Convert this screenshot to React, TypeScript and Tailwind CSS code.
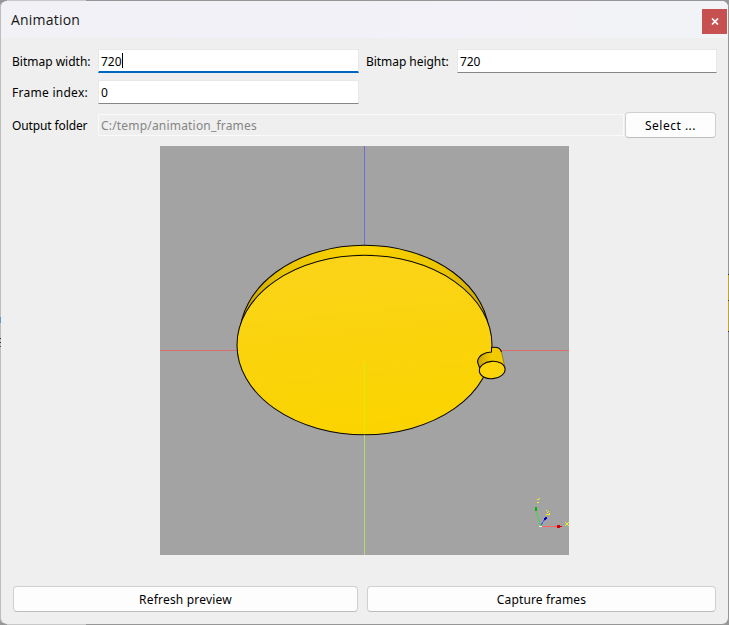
import React from "react";

const field =
  "flex items-center bg-white border border-[#e8e8e8] border-b-[#868686] pl-[2px]";
const button =
  "flex items-center justify-center rounded-[4px] border border-[#d0d0d0] border-b-[#bcbcbc] bg-[#fdfdfd] pt-[2px]";

function Preview() {
  return (
    <svg width="409" height="409" viewBox="160 146 409 409" className="mx-auto mt-[8px] block bg-[#a3a3a3]">
      <defs>
        <linearGradient id="face" x1="0" y1="0" x2="0.15" y2="1">
          <stop offset="0" stopColor="#fbd41b" />
          <stop offset="0.6" stopColor="#fad30b" />
          <stop offset="1" stopColor="#fbd400" />
        </linearGradient>
        <linearGradient id="rim">
          <stop offset="0" stopColor="#c7a500" />
          <stop offset="0.18" stopColor="#ebc500" />
          <stop offset="0.5" stopColor="#fbd400" />
          <stop offset="0.82" stopColor="#ebc500" />
          <stop offset="1" stopColor="#c7a500" />
        </linearGradient>
        <linearGradient id="peg">
          <stop offset="0" stopColor="#c5a200" />
          <stop offset="0.5" stopColor="#f3cb00" />
          <stop offset="1" stopColor="#f0c900" />
        </linearGradient>
      </defs>
      <path d="M160 350.5H238M499 350.5H569" stroke="#dc6e6e" />
      <path d="M364.5 146V246" stroke="#706edc" />
      <ellipse cx="364.500" cy="336.500" rx="124.800" ry="91.200" fill="url(#rim)" stroke="#0a0800" strokeWidth="1.050" />
      <ellipse cx="364.500" cy="345" rx="127.500" ry="89.700" fill="url(#face)" stroke="#0a0800" strokeWidth="1.050" />
      <path d="M364.5 362V434" stroke="#d9ee08" />
      <path d="M364.5 435V555" stroke="#b3dc70" />
      <path d="M477.500 362C478 356 484 352 491.500 352L492 347.500C497 346.500 500.500 348 501.500 352L505 368L480 371Z" fill="url(#peg)" />
      <path d="M480 369L477.500 362C478 356 484 352 491.500 352V347.500C497 346.500 500.500 348 501.500 352" fill="none" stroke="#0a0800" strokeWidth="1.050" />
      <path d="M501.500 352L505 368" stroke="#6f5d10" strokeWidth="0.600" />
      <ellipse cx="492.200" cy="370" rx="12.900" ry="8.700" transform="rotate(-5 492.200 370)" fill="#fbd40b" stroke="#0a0800" strokeWidth="1.100" />
      <g shapeRendering="crispEdges">
        <path d="M541 526.5H558" stroke="#ff6262" />
        <path d="M557 525h3v1h2v1h-2v1h-3z" fill="#d60000" />
        <path d="M540.500 526L536.500 511" stroke="#19ef25" strokeDasharray="3 1" />
        <path d="M535 507h2v4h-2z" fill="#00b800" />
        <path d="M541 525L545 519" stroke="#5757ff" />
        <path d="M544 518h1v-1h2v2h-1v1h-2z" fill="#0000c5" />
        <path d="M537 499.500h2M539 498.500h1M537 502.500h2M546 510.500h1M548 511.500h1M547 512.500h1M546 514.500h4M549 513.500h1M565 522.500h1M568 522.500h1M566 523.500h2M566 524.500h2M565 525.500h1M568 525.500h1" stroke="#f4ef25" />
        <path d="M539 526h3v1h-3z" fill="#eee" />
      </g>
    </svg>
  );
}

export default function App() {
  return (
    <div className="relative h-[625px] w-[729px] overflow-hidden bg-[#969696] font-['Noto_Sans',sans-serif] text-[12px] leading-4 text-black">
      <main className="flex h-full w-full flex-col overflow-hidden rounded-[7px] border border-[#969696] border-l-[#bdbdbd] bg-[#efefef]">
        <header className="flex h-[37px] shrink-0 items-center justify-between bg-gradient-to-r from-[#f1f1f6] via-[#f3f1f8] to-[#f1f3f6] pl-[10px]">
          <h1 className="font-['Open_Sans',sans-serif] text-[14px] font-normal tracking-[0.2px] text-[#171717]">Animation</h1>
          <button className="mt-[3px] mr-px flex h-[25px] w-[25px] items-center justify-center bg-[#c75050]">
            <svg width="8" height="7" viewBox="0 0 8 7"><path d="M1 .5L7 6.500M7 .5L1 6.500" stroke="white" strokeWidth="1.700" /></svg>
          </button>
        </header>
        <div className="mt-[11px] flex h-6 shrink-0 items-center pl-[11px]">
          <label className="w-[86px] pt-[2px]">Bitmap width:</label>
          <div className="flex h-6 w-[261px] items-center border border-[#e8e8e8] border-b-2 border-b-[#0067c0] bg-white pl-[2px]">
            <span className="pt-[2px]">720</span><span className="h-[15px] w-px bg-black" />
          </div>
          <label className="ml-[7px] w-[91px] pt-[2px] tracking-[-0.05px]">Bitmap height:</label>
          <div className={field + " h-6 w-[260px]"}><span className="pt-[2px] tracking-[-0.1px]">720</span></div>
        </div>
        <div className="mt-[7px] flex h-6 shrink-0 items-center pl-[11px]">
          <label className="w-[86px] pt-[2px] tracking-[0.27px]">Frame index:</label>
          <div className={field + " h-6 w-[261px]"}><span className="pt-[2px]">0</span></div>
        </div>
        <div className="mt-[8px] flex h-[26px] shrink-0 items-center pl-[11px]">
          <label className="w-[86px] pt-[2px] tracking-[-0.12px]">Output folder</label>
          <div className="flex h-[22px] w-[526px] items-center border border-[#fafafa] pl-[2px] pt-[2px] tracking-[0.19px] text-[#858585]">C:/temp/animation_frames</div>
          <button className={button + " ml-px h-[26px] w-[91px] tracking-[0.5px]"}>Select ...</button>
        </div>
        <Preview />
        <footer className="mt-[31px] flex gap-[9px] pl-[12px]">
          <button className={button + " h-[26px] w-[345px] tracking-[0.2px]"}>Refresh preview</button>
          <button className={button + " h-[26px] w-[349px] tracking-[0.14px]"}>Capture frames</button>
        </footer>
      </main>
      <div className="absolute top-0 left-[7px] h-px w-[79px] bg-[#c8c8c8]" />
      <div className="absolute bottom-0 left-[7px] h-px w-[79px] bg-[#c8c8c8]" />
      <div className="absolute top-[317px] left-0 h-[6px] w-px bg-[#559bd2]" />
      <div className="absolute top-[338px] left-0 h-px w-px bg-[#333]" />
      <div className="absolute top-[342px] left-0 h-px w-px bg-[#333]" />
      <div className="absolute top-[346px] left-0 h-px w-px bg-[#555]" />
      <div className="absolute top-[274px] right-0 h-[58px] w-px border-y border-[#333] bg-[#b8a63b]" />
      <div className="absolute top-[300px] right-0 h-px w-px bg-[#51451b]" />
    </div>
  );
}
